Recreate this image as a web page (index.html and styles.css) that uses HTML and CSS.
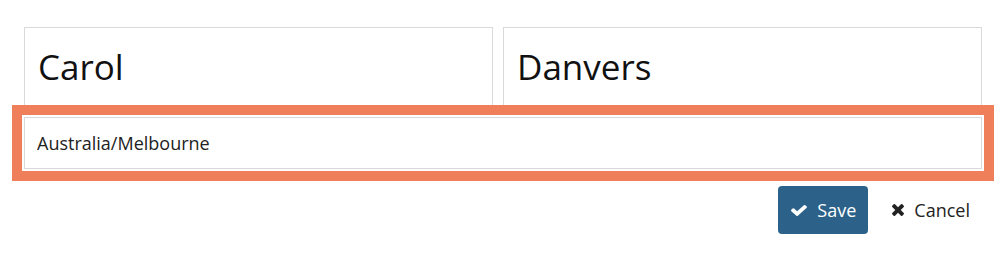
FILE: index.html
```html
<!DOCTYPE html>
<html lang="en">
<head>
<meta charset="utf-8">
<title>Edit profile</title>
<link rel="stylesheet" href="styles.css">
</head>
<body>
<form class="form">
  <div class="names">
    <input class="field field-big" type="text" value="Carol">
    <input class="field field-big" type="text" value="Danvers">
  </div>
  <div class="tz-row">
    <input class="field field-tz" type="text" value="Australia/Melbourne">
  </div>
  <div class="actions">
    <button type="button" class="btn btn-save">
      <svg class="ico-check" viewBox="121 334 1550 1188" preserveAspectRatio="none" aria-hidden="true"><path d="M1671 566q0 40-28 68l-724 724-136 136q-28 28-68 28t-68-28l-136-136-362-362q-28-28-28-68t28-68l136-136q28-28 68-28t68 28l294 295 656-657q28-28 68-28t68 28l136 136q28 28 28 68z" fill="currentColor"/></svg>
      <span>Save</span>
    </button>
    <button type="button" class="btn btn-cancel">
      <svg class="ico-times" viewBox="302 366 1188 1188" aria-hidden="true"><path d="M1490 1322q0 40-28 68l-136 136q-28 28-68 28t-68-28l-294-294-294 294q-28 28-68 28t-68-28l-136-136q-28-28-28-68t28-68l294-294-294-294q-28-28-28-68t28-68l136-136q28-28 68-28t68 28l294 294 294-294q28-28 68-28t68 28l136 136q28 28 28 68t-28 68l-294 294 294 294q28 28 28 68z" fill="currentColor"/></svg>
      <span>Cancel</span>
    </button>
  </div>
</form>
</body>
</html>
```

FILE: styles.css
```css
* { box-sizing: border-box; }

html, body {
  margin: 0;
  padding: 0;
  background: #ffffff;
}

body {
  font-family: "Open Sans", "Noto Sans", "Liberation Sans", sans-serif;
  color: #1a1a1a;
}

.form {
  width: 958px;
  margin: 27px 0 0 24px;
}

.names {
  display: grid;
  grid-template-columns: 469px 479px;
  gap: 10px;
}

.field {
  display: block;
  width: 100%;
  margin: 0;
  border: 1px solid #d9d9d9;
  border-radius: 0;
  background: #ffffff;
  font-family: "Open Sans", "Noto Sans", "Liberation Sans", sans-serif;
  color: #111111;
  outline: none;
}

.field-big {
  height: 80px;
  padding: 0 0 2px 13px;
  font-size: 35px;
}

.tz-row {
  margin-top: 10px;
}

.field-tz {
  height: 52px;
  padding: 0 12px;
  font-size: 18px;
  color: #222222;
  outline: 10px solid #ef7e5a;
  outline-offset: 2px;
}

.actions {
  display: flex;
  justify-content: flex-end;
  align-items: center;
  gap: 12px;
  margin-top: 17px;
}

.btn {
  display: flex;
  align-items: center;
  height: 48px;
  border: none;
  margin: 0;
  font-family: "Open Sans", "Noto Sans", "Liberation Sans", sans-serif;
  font-size: 18px;
  cursor: pointer;
}

.btn-save {
  gap: 10px;
  padding: 0 12px 0 13px;
  background: #2c6289;
  color: #ffffff;
  border-radius: 4px;
}

.btn-cancel {
  gap: 10px;
  padding: 0 12px 0 12px;
  background: transparent;
  color: #222222;
}

.ico-check {
  width: 16px;
  height: 11px;
}

.ico-times {
  width: 12px;
  height: 12px;
}
```
